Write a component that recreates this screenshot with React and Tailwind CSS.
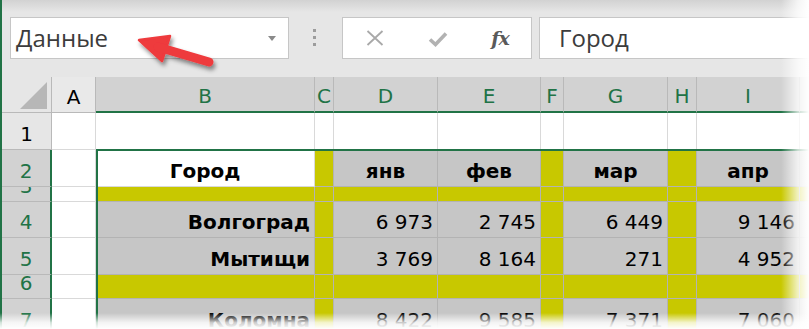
import React from 'react';

const Y = 'bg-[#c8c800]';
const G = 'bg-[#c6c6c6]';
const W = 'bg-white';

const rowDefs = [
  { n: 1, h: 'h-[37px]', sel: false, fills: [W, W, W, W, W, W, W, W, W, W], cells: {} },
  {
    n: 2, h: 'h-[37px]', sel: true,
    fills: [W, W, Y, G, G, Y, G, Y, G, G],
    cells: { 1: ['Город', 'c'], 3: ['янв', 'c'], 4: ['фев', 'c'], 6: ['мар', 'c'], 8: ['апр', 'c'] },
    bold: true,
  },
  { n: 3, h: 'h-[15px]', sel: true, fills: [W, Y, Y, Y, Y, Y, Y, Y, Y, Y], cells: {} },
  {
    n: 4, h: 'h-[36px]', sel: true,
    fills: [W, G, Y, G, G, Y, G, Y, G, G],
    cells: { 1: ['Волгоград', 'rb'], 3: ['6 973', 'r'], 4: ['2 745', 'r'], 6: ['6 449', 'r'], 8: ['9 146', 'r'] },
  },
  {
    n: 5, h: 'h-[37px]', sel: true,
    fills: [W, G, Y, G, G, Y, G, Y, G, G],
    cells: { 1: ['Мытищи', 'rb'], 3: ['3 769', 'r'], 4: ['8 164', 'r'], 6: ['271', 'r'], 8: ['4 952', 'r'] },
  },
  { n: 6, h: 'h-[24px]', sel: true, fills: [W, Y, Y, Y, Y, Y, Y, Y, Y, Y], cells: {} },
  {
    n: 7, h: 'h-[37px]', sel: true,
    fills: [W, G, Y, G, G, Y, G, Y, G, G],
    cells: { 1: ['Коломна', 'rb'], 3: ['8 422', 'r'], 4: ['9 585', 'r'], 6: ['7 371', 'r'], 8: ['7 060', 'r'] },
  },
];

const widths = ['w-[44px]', 'w-[219px]', 'w-[19px]', 'w-[104px]', 'w-[103px]', 'w-[23px]', 'w-[104px]', 'w-[29px]', 'w-[103px]', 'w-[40px]'];
const letters = ['A', 'B', 'C', 'D', 'E', 'F', 'G', 'H', 'I', ''];

function TopBar() {
  return (
    <div className="relative h-[77px] shrink-0 bg-[#e6e6e6] flex items-start pt-[17px] pl-[8px] font-['Open_Sans',sans-serif]">
      <div className="absolute left-0 top-0 w-full h-[12px] bg-[linear-gradient(to_bottom,#d2d2d2,rgba(230,230,230,0))]" />
      <div className="relative w-[279px] h-[42px] border border-[#c6c6c6] bg-white flex items-center justify-between pl-[5px] pr-[12px]">
        <span className="text-[24px] text-[#3c3c3c] leading-none">Данные</span>
        <svg width="8" height="5" viewBox="0 0 8 5"><path d="M0 0h8L4 5z" fill="#8a8a8a" /></svg>
      </div>
      <div className="relative ml-[24px] mt-[12px] flex flex-col gap-[4px]">
        <div className="w-[3px] h-[3px] bg-[#9c9c9c]" />
        <div className="w-[3px] h-[3px] bg-[#9c9c9c]" />
        <div className="w-[3px] h-[3px] bg-[#9c9c9c]" />
      </div>
      <div className="relative ml-[26px] w-[190px] h-[42px] border border-[#c6c6c6] bg-white flex items-center">
        <div className="w-[63px] flex justify-center pl-[1px]">
          <svg width="18" height="16" viewBox="0 0 18 16">
            <path d="M1.5 1 L16.5 15 M16.5 1 L1.5 15" stroke="#a9a9a9" strokeWidth="1.8" />
          </svg>
        </div>
        <div className="w-[63px] flex justify-center pt-[2px]">
          <svg width="20" height="16" viewBox="0 0 20 16">
            <path d="M2 8.5 L7.5 13.5 L18 2.5" stroke="#b2b2b2" strokeWidth="3.6" fill="none" />
          </svg>
        </div>
        <div className="w-[62px] flex justify-center">
          <span className="font-['DejaVu_Serif',serif] italic font-bold text-[19px] text-[#5a5a5a] leading-none tracking-[-1px]">fx</span>
        </div>
      </div>
      <div className="relative ml-[7px] flex-1 h-[42px] border-y border-l border-[#c6c6c6] bg-white flex items-center pl-[19px]">
        <span className="text-[24px] text-[#3c3c3c] leading-none">Город</span>
      </div>
    </div>
  );
}

function HeaderRow() {
  return (
    <div className="flex h-[36px] shrink-0">
      <div className="relative w-[50px] shrink-0 bg-[#e6e6e6] border-r border-b border-[#b9b9b9]">
        <svg className="absolute left-[18px] top-[5px]" width="28" height="28" viewBox="0 0 28 28">
          <path d="M27 0 L27 27 L0 27 Z" fill="#b7b7b7" />
        </svg>
      </div>
      {letters.map((l, i) => (
        <div
          key={i}
          className={
            widths[i] +
            ' shrink-0 flex items-end justify-center pb-[3px] text-[20px] leading-[23px] border-r ' +
            (i === 0
              ? 'bg-[#e9e9e9] text-black border-b border-[#b9b9b9]'
              : 'bg-[#d2d2d2] text-[#217346] border-r-[#b9b9b9] border-b-2 border-b-[#217346]')
          }
        >
          {l}
        </div>
      ))}
    </div>
  );
}

function Row({ r }) {
  return (
    <div className={'flex shrink-0 ' + r.h}>
      <div
        className={
          'w-[50px] shrink-0 overflow-hidden flex items-end justify-center text-[20px] leading-[23px] pb-[3px] border-b ' +
          (r.sel
            ? 'bg-[#d2d2d2] text-[#217346] border-b-[#b9b9b9] border-r-2 border-r-[#217346]'
            : 'bg-[#e6e6e6] text-black border-b-[#b9b9b9] border-r border-r-[#b9b9b9]')
        }
      >
        {r.n}
      </div>
      {r.fills.map((f, i) => {
        const c = r.cells[i];
        const line = f === W ? 'border-[#d9d9d9]' : 'border-[#b3b3b3]';
        let align = 'justify-end pr-[4px]';
        let weight = '';
        if (c && c[1] === 'c') {
          align = 'justify-center';
          weight = 'font-bold';
        }
        if (c && c[1] === 'rb') weight = 'font-bold';
        return (
          <div
            key={i}
            className={
              widths[i] +
              ' shrink-0 overflow-hidden flex items-end pb-[3px] text-[20px] leading-[23px] text-black border-r border-b whitespace-nowrap ' +
              f + ' ' + line + ' ' + align + ' ' + weight
            }
          >
            {c ? c[0] : ''}
          </div>
        );
      })}
    </div>
  );
}

export default function App() {
  return (
    <div className="relative w-[809px] h-[329px] overflow-hidden bg-white">
      <div className="flex flex-col h-full border-l-2 border-[#217346] font-['DejaVu_Sans',sans-serif]">
        <TopBar />
        <HeaderRow />
        {rowDefs.map((r) => (
          <Row key={r.n} r={r} />
        ))}
      </div>

      {/* selection border */}
      <div className="absolute left-[96px] top-[149px] w-[800px] h-[220px] border-2 border-[#217346] pointer-events-none" />

      {/* red arrow */}
      <svg className="absolute left-0 top-0 pointer-events-none" width="260" height="90" viewBox="0 0 260 90">
        <defs>
          <filter id="sh" x="-20%" y="-40%" width="150%" height="200%">
            <feDropShadow dx="2" dy="3.5" stdDeviation="2" floodColor="#000" floodOpacity="0.45" />
          </filter>
        </defs>
        <g filter="url(#sh)" fill="#ee3a3d" stroke="#ee3a3d" strokeLinejoin="round" strokeLinecap="round">
          <path d="M139 40 L170 36 L162 61 Z" strokeWidth="2.5" />
          <path d="M158 47 L209 62" strokeWidth="9" fill="none" />
        </g>
      </svg>

      {/* page-edge fades */}
      <div className="absolute right-0 top-0 h-full w-[28px] bg-[linear-gradient(to_right,rgba(255,255,255,0),rgba(255,255,255,0.75)_60%,#fff)] pointer-events-none" />
      <div className="absolute left-0 bottom-0 w-full h-[16px] bg-[linear-gradient(to_bottom,rgba(255,255,255,0),rgba(255,255,255,0.8)_60%,#fff)] pointer-events-none" />
    </div>
  );
}
